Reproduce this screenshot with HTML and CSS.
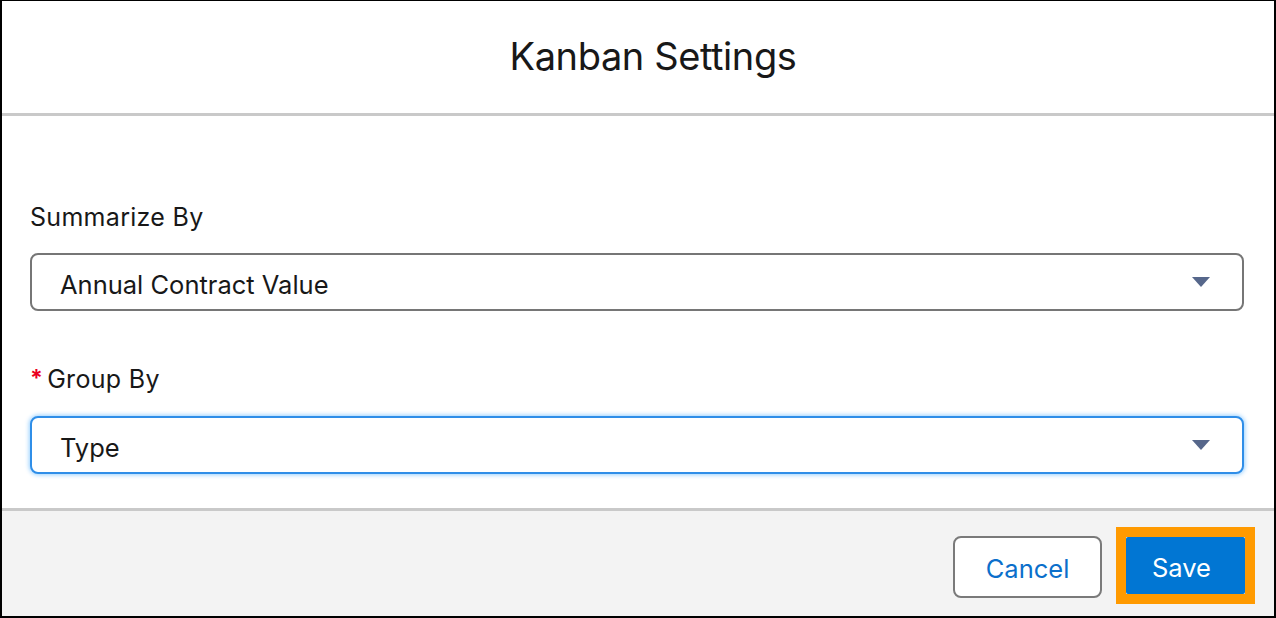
FILE: index.html
```html
<!DOCTYPE html>
<html lang="en">
<head>
<meta charset="utf-8">
<title>Kanban Settings</title>
<link rel="stylesheet" href="styles.css">
</head>
<body>
<div class="modal">
  <header class="modal-header">
    <h2 class="modal-title">Kanban Settings</h2>
  </header>
  <main class="modal-body">
    <div class="field field-first">
      <label class="field-label">Summarize By</label>
      <div class="select">
        <span class="select-value">Annual Contract Value</span>
        <svg class="select-arrow" width="18" height="10" viewBox="0 0 18 10"><path d="M0 0 H18 L9 10 Z" fill="#56678b"/></svg>
      </div>
    </div>
    <div class="field field-second">
      <label class="field-label"><abbr class="required" title="required">*</abbr>Group By</label>
      <div class="select select-focus">
        <span class="select-value">Type</span>
        <svg class="select-arrow" width="18" height="10" viewBox="0 0 18 10"><path d="M0 0 H18 L9 10 Z" fill="#56678b"/></svg>
      </div>
    </div>
  </main>
  <footer class="modal-footer">
    <button class="btn btn-neutral">Cancel</button>
    <span class="highlight"><button class="btn btn-brand">Save</button></span>
  </footer>
</div>
</body>
</html>
```

FILE: styles.css
```css
html, body {
  margin: 0;
  padding: 0;
  background: #ffffff;
}

body {
  font-family: Inter, "Liberation Sans", Arial, sans-serif;
  color: #181818;
}

.modal {
  width: 1276px;
  height: 618px;
  box-sizing: border-box;
  border-style: solid;
  border-color: #000000;
  border-width: 1px 2px 2px 2px;
  display: flex;
  flex-direction: column;
  background: #ffffff;
}

.modal-header {
  height: 112px;
  border-bottom: 3px solid #c9c9c9;
  display: flex;
  align-items: center;
  justify-content: center;
  padding-left: 30px;
  flex: none;
}

.modal-title {
  margin: 0;
  font-size: 38px;
  font-weight: 400;
  letter-spacing: -0.4px;
  color: #181818;
  padding-bottom: 2px;
}

.modal-body {
  flex: 1;
  padding: 0 30px 0 28px;
}

.field {
  display: flex;
  flex-direction: column;
}

.field-first {
  margin-top: 86px;
}

.field-second {
  margin-top: 53px;
}

.field-label {
  font-size: 25px;
  letter-spacing: 0.3px;
  line-height: 30px;
  color: #181818;
  margin-bottom: 21px;
  display: flex;
  align-items: baseline;
}

.required {
  color: #ea001e;
  text-decoration: none;
  border: none;
  font-size: 23px;
  font-weight: 700;
  margin-right: 4px;
  position: relative;
  top: -2px;
}

.select {
  height: 58px;
  box-sizing: border-box;
  border: 2px solid #767676;
  border-radius: 8px;
  display: flex;
  align-items: center;
  justify-content: space-between;
  padding: 0 32px 0 28px;
  background: #ffffff;
}

.select-focus {
  border-color: #2f8ee8;
  box-shadow: 0 0 4px 1px rgba(27, 150, 255, 0.45);
}

.select-value {
  font-size: 25.5px;
  color: #181818;
  padding-top: 5px;
}

.select-arrow {
  display: block;
}

.modal-footer {
  height: 105px;
  flex: none;
  border-top: 3px solid #c9c9c9;
  background: #f3f3f3;
  display: flex;
  align-items: flex-start;
  justify-content: flex-end;
  padding-right: 19px;
  gap: 14px;
}

.btn {
  font-family: Inter, "Liberation Sans", Arial, sans-serif;
  font-size: 25.5px;
  border-radius: 8px;
  box-sizing: border-box;
  cursor: pointer;
  padding: 2px 0 0 0;
}

.btn-neutral {
  margin-top: 25px;
  width: 149px;
  height: 62px;
  border: 2px solid #7a7a7a;
  background: #ffffff;
  color: #0b6fcb;
}

.highlight {
  margin-top: 16px;
  display: block;
  border: 10px solid #ff9a00;
  line-height: 0;
}

.btn-brand {
  width: 119px;
  height: 57px;
  border: none;
  background: #0176d3;
  color: #ffffff;
  border-radius: 2px;
  padding: 4px 8px 0 0;
  line-height: normal;
}
```
